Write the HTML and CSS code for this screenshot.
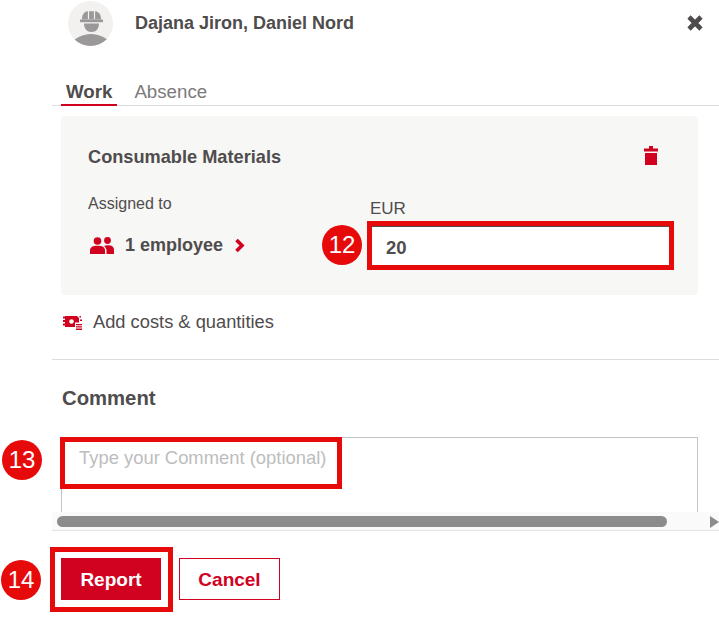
FILE: index.html
```html
<!DOCTYPE html>
<html lang="en">
<head>
    <meta charset="UTF-8">
    <meta name="viewport" content="width=device-width, initial-scale=1.0">
    <title>Report costs</title>
    <link rel="stylesheet" href="styles.css">
</head>
<body>
    <div class="dialog">
        <div class="header">
            <svg class="avatar" viewBox="0 0 45 45">
                <defs>
                    <clipPath id="avatar-clip">
                        <circle cx="22.5" cy="22.5" r="22.5"/>
                    </clipPath>
                </defs>
                <circle cx="22.5" cy="22.5" r="22.5" fill="#f2f1f0"/>
                <path d="M14 18.500c0-4.500 1.500-7 5-8.200h9c3.500 1.200 5 3.700 5 8.200z" fill="#9a9899"/>
                <path d="M20.500 10v8M26.500 10v8" stroke="#f2f1f0" stroke-width="1.200"/>
                <path d="M12 18.500h23v2.700H12z" fill="#9a9899"/>
                <path d="M16 22.500h15c0 5-3 8.500-7.500 8.500S16 27.500 16 22.500z" fill="#9a9899"/>
                <path d="M3 45v-3c5-5.500 12-9 20-9s15 3.500 20 9v3z" fill="#9a9899" clip-path="url(#avatar-clip)"/>
            </svg>
            <h1 class="name">Dajana Jiron, Daniel Nord</h1>
            <svg class="close" viewBox="0 0 16 16">
                <path d="M2 2L14 14M14 2L2 14" fill="none" stroke="#4f4c4d" stroke-width="4.600"/>
            </svg>
        </div>

        <div class="tabs">
            <span class="tab active">Work</span>
            <span class="tab">Absence</span>
        </div>

        <div class="card">
            <div class="card-top">
                <h2 class="card-title">Consumable Materials</h2>
                <svg class="trash" viewBox="0 0 14 19">
                    <path d="M5 0h4v2.500h5v3H0v-3h5z" fill="#d0021f"/>
                    <path d="M1 7h12v12H1z" fill="#d0021f"/>
                </svg>
            </div>
            <div class="card-body">
                <div class="assigned">
                    <span class="label">Assigned to</span>
                    <div class="employee">
                        <svg class="people" viewBox="0 0 24 17">
                            <circle cx="7.500" cy="4" r="3.800" fill="#d0021f"/>
                            <circle cx="17.500" cy="3.500" r="3.400" fill="#d0021f"/>
                            <path d="M0 17v-3.500C0 10 3 8.800 7.500 8.800s7.500 1.200 7.500 4.700V17z" fill="#d0021f"/>
                            <path d="M16.500 17v-3.500c0-2-1-3.500-2.500-4.600 1-.4 2.300-.6 3.500-.6 4 0 6.500 1.300 6.500 4.700v4z" fill="#d0021f"/>
                        </svg>
                        <span class="employee-text">1 employee</span>
                        <svg class="chevron" viewBox="0 0 11 15">
                            <path d="M2.500 2L8 7.500 2.500 13" fill="none" stroke="#d0021f" stroke-width="3.600"/>
                        </svg>
                    </div>
                </div>
                <div class="amount">
                    <label class="label">EUR</label>
                    <div class="field">
                        <input class="input" type="text" value="20">
                        <span class="mark-box"></span>
                        <span class="mark mark-12">12</span>
                    </div>
                </div>
            </div>
        </div>

        <div class="add-costs">
            <svg class="costs" viewBox="0 0 19 15">
                <path d="M2 1h12l2 2v4.500h-4V12H2v-1.500H0V8.500h2V7H0V5h2V3.500H0v-2h2z" fill="#d0021f"/>
                <circle cx="8.500" cy="6.500" r="2.300" fill="#fff"/>
                <path d="M13 9h6v1.300h-6zM13 11.300h6v1.300h-6zM13 13.600h6v1.300h-6zM16.500 1H18v1.500h-1.500zM17 4.500h2V6h-2z" fill="#d0021f"/>
            </svg>
            <span>Add costs &amp; quantities</span>
        </div>

        <div class="comment">
            <h2 class="comment-title">Comment</h2>
            <div class="comment-box">
                <div class="comment-area">Type your Comment (optional)</div>
                <span class="mark-box mark-box-comment"></span>
                <span class="mark mark-13">13</span>
            </div>
        </div>

        <div class="scrollbar">
            <div class="thumb"></div>
            <div class="arrow"></div>
        </div>

        <div class="actions">
            <div class="report-wrap">
                <button class="btn btn-report">Report</button>
                <span class="mark-box mark-box-report"></span>
                <span class="mark mark-14">14</span>
            </div>
            <button class="btn btn-cancel">Cancel</button>
        </div>
    </div>
</body>
</html>
```

FILE: styles.css
```css
html, body {
    height: 623px;
    overflow: hidden;
}

body {
    margin: 0;
    background: #fff;
    color: #4f4c4d;
    font-family: "Liberation Sans", Arial, sans-serif;
}

.dialog {
    display: flex;
    flex-direction: column;
    padding-left: 52px;
}

.header {
    display: flex;
    align-items: center;
    height: 46px;
    padding-left: 16px;
}

.avatar {
    width: 45px;
    height: 45px;
}

.name {
    flex: 1;
    margin: 0 0 0 22px;
    font-size: 18px;
    font-weight: bold;
}

.close {
    width: 16px;
    height: 16px;
    margin-right: 16px;
}

.tabs {
    display: flex;
    height: 33px;
    margin-top: 26px;
    border-bottom: 1px solid #dcdcdc;
    padding-left: 9px;
}

.tab {
    height: 25px;
    padding: 8px 5px 0;
    margin-right: 12px;
    font-size: 18.7px;
    line-height: 24px;
    color: #7d7a7b;
}

.tab.active {
    height: 34px;
    border-bottom: 2px solid #d0021f;
    box-sizing: border-box;
    color: #4f4c4d;
    font-weight: bold;
}

.card {
    width: 637px;
    height: 179px;
    box-sizing: border-box;
    margin: 10px 0 0 9px;
    padding: 30px 40px 0 27px;
    background: #f7f7f5;
    border-radius: 4px;
}

.card-top {
    display: flex;
    align-items: center;
    justify-content: space-between;
    height: 22px;
}

.card-title {
    margin: 0;
    font-size: 18.200px;
    font-weight: bold;
}

.trash {
    width: 14px;
    height: 19px;
    margin-bottom: 3px;
}

.card-body {
    display: flex;
    margin-top: 26px;
}

.assigned {
    flex: none;
    width: 282px;
}

.amount {
    flex: none;
}

.label {
    display: block;
    font-size: 16px;
    line-height: 20px;
}

.employee {
    display: flex;
    align-items: center;
    margin-top: 21px;
    padding-left: 2px;
}

.people {
    width: 24px;
    height: 17px;
}

.employee-text {
    margin-left: 11px;
    font-size: 18px;
    font-weight: bold;
}

.chevron {
    width: 11px;
    height: 15px;
    margin-left: 11px;
}

.amount .label {
    margin-top: 5px;
    font-size: 17px;
}

.field {
    position: relative;
    width: 297px;
    margin: 7px 0 0 2px;
}

.input {
    display: block;
    width: 100%;
    height: 39px;
    box-sizing: border-box;
    padding: 3px 14px 0;
    border: 0;
    border-top: 1px solid #4f4c4d;
    background: #fff;
    color: #4f4c4d;
    font-family: inherit;
    font-size: 18.500px;
    font-weight: bold;
}

/* red annotations drawn on top of the screenshot */
.mark-box {
    position: absolute;
    inset: -5px;
    border: 5px solid #e60a0a;
    pointer-events: none;
}

.mark {
    position: absolute;
    width: 40px;
    height: 40px;
    border-radius: 50%;
    background: #e60a0a;
    color: #fff;
    font-size: 24px;
    line-height: 40px;
    text-align: center;
}

.mark-12 {
    left: -50px;
    top: -1px;
}

.add-costs {
    display: flex;
    align-items: center;
    height: 22px;
    margin-top: 16px;
    padding-left: 11px;
    font-size: 18.300px;
}

.costs {
    width: 19px;
    height: 15px;
    margin-right: 11px;
}

.comment {
    margin-top: 26px;
    padding-top: 26px;
    border-top: 1px solid #dcdcdc;
    padding-left: 9px;
}

.comment-title {
    margin: 0;
    padding-left: 1px;
    font-size: 20.300px;
    line-height: 24px;
    font-weight: bold;
}

.comment-box {
    position: relative;
    margin-top: 27px;
    width: 637px;
}

.comment-area {
    height: 75px;
    box-sizing: border-box;
    padding: 10px 17px 0;
    border: 1px solid #c4c4c4;
    border-bottom: 0;
    color: #bdbdbd;
    font-size: 18.400px;
    line-height: 20px;
}

.mark-box-comment {
    inset: 0 auto auto -1px;
    width: 282px;
    height: 52px;
    box-sizing: border-box;
}

.mark-13 {
    left: -59px;
    top: 3px;
}

.scrollbar {
    position: relative;
    height: 18px;
    background: #fafafa;
    border-bottom: 1px solid #e2e2e0;
}

.thumb {
    width: 610px;
    height: 11px;
    margin: 4px 0 0 5px;
    background: #8c8c8c;
    border-radius: 6px;
}

.arrow {
    position: absolute;
    right: 0;
    top: 4px;
    border-left: 9px solid #8c8c8c;
    border-top: 6px solid transparent;
    border-bottom: 6px solid transparent;
}

.actions {
    display: flex;
    gap: 18px;
    margin-top: 27px;
    padding-left: 9px;
}

.report-wrap {
    position: relative;
}

.btn {
    display: block;
    height: 42px;
    box-sizing: border-box;
    padding-top: 3px;
    font-family: inherit;
    font-size: 19px;
    font-weight: bold;
}

.btn-report {
    width: 100px;
    border: 0;
    background: #d0021f;
    color: #fff;
}

.btn-cancel {
    width: 101px;
    border: 1px solid #d0021f;
    background: #fff;
    color: #d0021f;
}

.mark-box-report {
    inset: -11px -12px -12px -11px;
}

.mark-14 {
    left: -60px;
    top: 2px;
}
```
